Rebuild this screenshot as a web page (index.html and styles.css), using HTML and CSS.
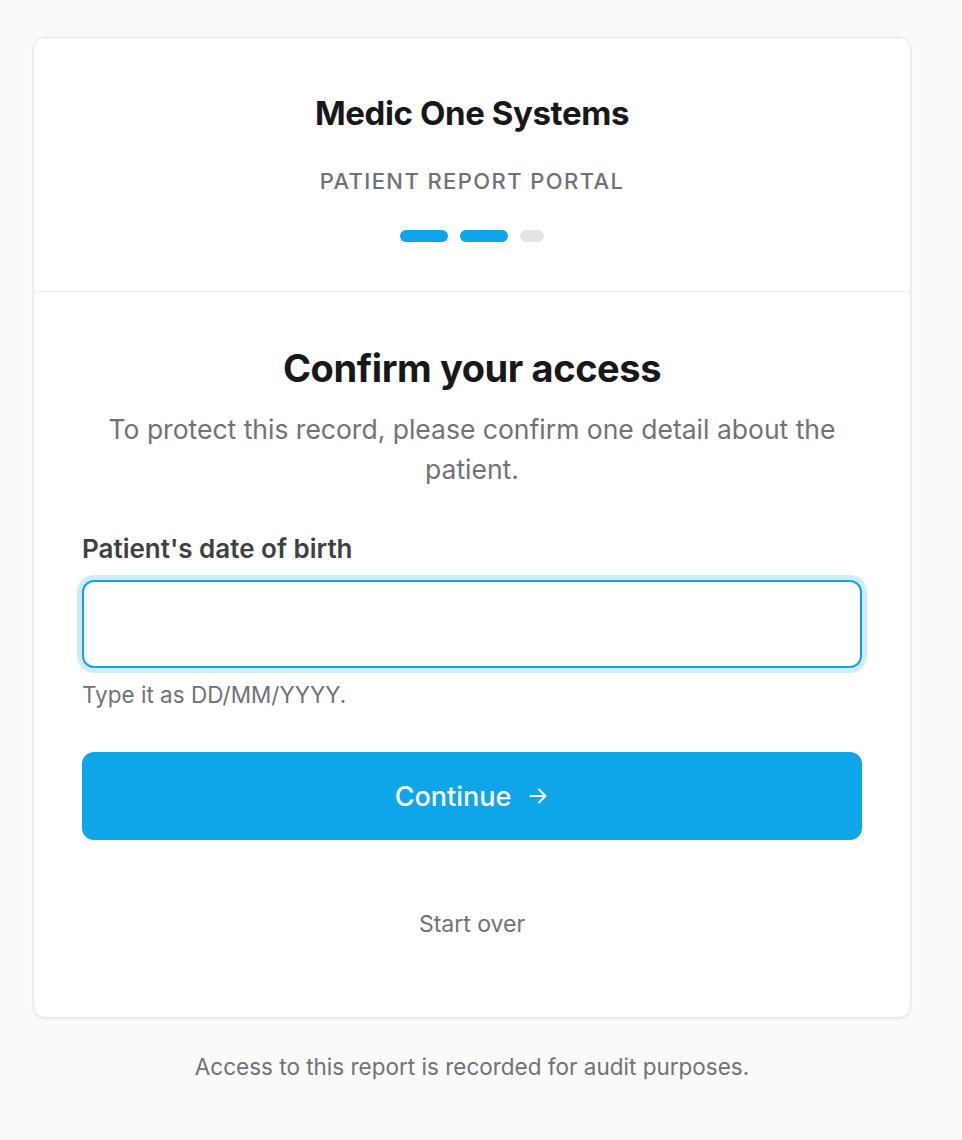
FILE: index.html
```html
<!DOCTYPE html>
<html lang="en">
<head>
<meta charset="utf-8">
<title>Medic One Systems – Patient Report Portal</title>
<link rel="stylesheet" href="styles.css">
</head>
<body>
<main class="page">
  <section class="card">
    <header class="card-head">
      <h1 class="brand">Medic One Systems</h1>
      <p class="portal">PATIENT REPORT PORTAL</p>
      <div class="steps">
        <span class="step step-done"></span>
        <span class="step step-done"></span>
        <span class="step step-todo"></span>
      </div>
    </header>
    <div class="card-body">
      <h2 class="title">Confirm your access</h2>
      <p class="lead">To protect this record, please confirm one detail about the patient.</p>
      <form class="form">
        <label class="label" for="dob">Patient's date of birth</label>
        <input class="input" id="dob" type="text">
        <p class="hint">Type it as DD/MM/YYYY.</p>
        <button class="btn" type="button">Continue <span class="arrow"><svg width="22" height="22" viewBox="0 0 22 22" fill="none" stroke="currentColor" stroke-width="2" stroke-linecap="round" stroke-linejoin="round"><path d="M3.5 11h15M12 4.5l6.5 6.5-6.5 6.5"/></svg></span></button>
      </form>
      <a class="restart" href="#">Start over</a>
    </div>
  </section>
  <p class="footer">Access to this report is recorded for audit purposes.</p>
</main>
</body>
</html>
```
FILE: styles.css
```css
* { box-sizing: border-box; }
html, body { margin: 0; padding: 0; }
body {
  background: #fafafa;
  font-family: Inter, "Noto Sans", "Liberation Sans", sans-serif;
  color: #18181b;
}
.page {
  width: 878px;
  margin-left: 33px;
  padding-top: 37px;
  display: flex;
  flex-direction: column;
}
.card {
  background: #fff;
  border: 1px solid #e4e4e7;
  border-radius: 12px;
  box-shadow: 0 1px 3px rgba(0,0,0,0.07);
}
.card-head {
  padding: 55px 48px 49px;
  border-bottom: 1px solid #eeeef0;
  display: flex;
  flex-direction: column;
  align-items: center;
}
.brand {
  margin: 0;
  font-size: 33px;
  line-height: 40px;
  font-weight: 700;
  letter-spacing: -0.4px;
  color: #18181b;
}
.portal {
  margin: 34px 0 0;
  font-size: 22px;
  line-height: 28px;
  font-weight: 500;
  letter-spacing: 1.4px;
  color: #71717a;
}
.steps {
  margin-top: 35px;
  display: flex;
  gap: 12px;
}
.step {
  height: 12px;
  border-radius: 6px;
}
.step-done { width: 48px; background: #0ea5e9; }
.step-todo { width: 24px; background: #e4e4e7; }
.card-body {
  padding: 54px 48px 78px;
  display: flex;
  flex-direction: column;
  align-items: center;
}
.title {
  margin: 0;
  font-size: 38px;
  line-height: 44px;
  font-weight: 700;
  letter-spacing: -0.4px;
  color: #18181b;
}
.lead {
  margin: 19px 0 0;
  max-width: 770px;
  font-size: 26.5px;
  line-height: 40px;
  text-align: center;
  color: #71717a;
}
.form {
  align-self: stretch;
  margin-top: 44px;
  display: flex;
  flex-direction: column;
}
.label {
  font-size: 26px;
  line-height: 32px;
  font-weight: 600;
  color: #3f3f46;
}
.input {
  margin-top: 15px;
  height: 88px;
  border: 2px solid #0ea5e9;
  border-radius: 12px;
  box-shadow: 0 0 0 5px #d0ecfa;
  outline: none;
  font: inherit;
  font-size: 24px;
  padding: 0 20px;
  background: #fff;
}
.hint {
  margin: 13px 0 0;
  font-size: 22.5px;
  line-height: 28px;
  color: #71717a;
}
.btn {
  margin-top: 43px;
  height: 88px;
  border: none;
  border-radius: 12px;
  background: #0ea5e9;
  color: #fff;
  font: inherit;
  font-size: 27px;
  font-weight: 500;
  display: flex;
  align-items: center;
  justify-content: center;
  gap: 16px;
  cursor: pointer;
}
.arrow { display: flex; }
.restart {
  margin-top: 69px;
  font-size: 23px;
  line-height: 30px;
  color: #71717a;
  text-decoration: none;
}
.footer {
  margin: 34px 0 0;
  font-size: 22.5px;
  line-height: 30px;
  text-align: center;
  color: #71717a;
}
```
